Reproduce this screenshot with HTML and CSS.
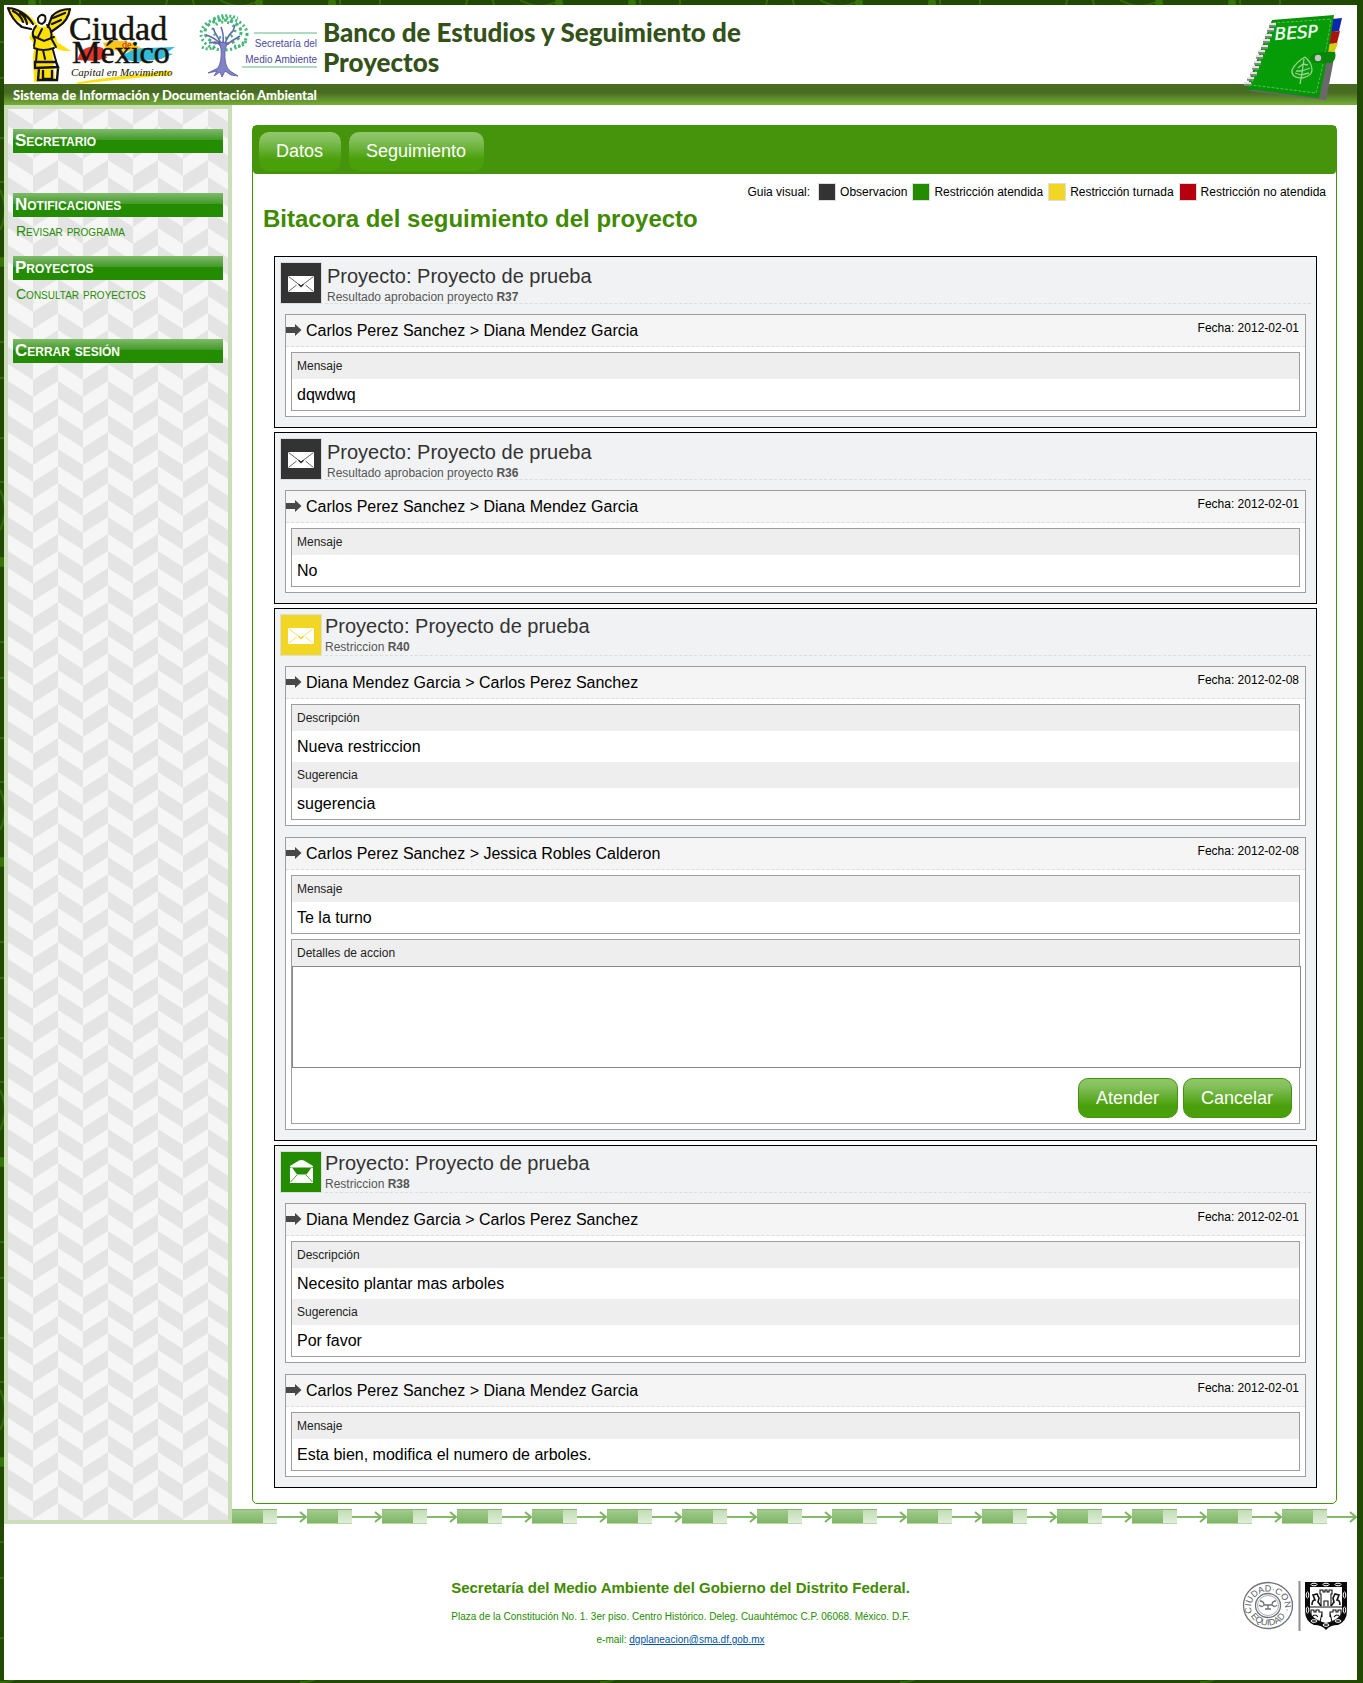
FILE: index.html
```html
<!DOCTYPE html>
<html lang="es">
<head>
<meta charset="utf-8">
<meta name="viewport" content="width=device-width, initial-scale=1">
<title>Banco de Estudios y Seguimiento de Proyectos</title>
<link rel="stylesheet" href="styles.css">
</head>
<body>
<svg class="sprite" aria-hidden="true">
  <symbol id="mail" viewBox="0 0 40 40">
    <path d="M7 13h26v16H7z" fill="#fff"/>
    <path d="M7.5 13.5l12.500 9.500l12.500-9.500M7.500 28.500l8-6.500M32.500 28.500l-8-6.500" fill="none" stroke="currentColor" stroke-width="1" opacity=".75"/>
    <path d="M17.500 21.200l2.500 2.300l2.500-2.300" fill="none" stroke="currentColor" stroke-width="1.500"/>
  </symbol>
  <symbol id="mail-open" viewBox="0 0 40 40">
    <path d="M9 14l9-5.500q2.500-1 5 0l9 5.500v17H9z" fill="#fff"/>
    <path d="M11 15.500h19.500l-5 7h-9.500zM9 15h2l-1.500 1zM32 15h-2l1.500 1z" fill="currentColor"/>
    <path d="M9.500 30l6.500-7M31.500 30l-6.500-7" stroke="currentColor" fill="none" opacity=".8"/>
  </symbol>
  <symbol id="arrow" viewBox="0 0 16 14">
    <path d="M0 4h9V1l6.500 6L9 13V10H0z" fill="#484848"/>
  </symbol>
</svg>

<div class="page">
  <header class="header">
    <div class="brand">
      <svg class="logo-city" viewBox="0 0 172 79" role="img" aria-label="Ciudad de México">
        <path d="M74 46q10-7 22-3l4 10-12 3-18-1z" fill="#e2362c"/>
        <path d="M96 38q14-5 30 0l9 6-18 3-18-3z" fill="#fbc51c"/>
        <path d="M112 53q14-11 27-10l29-1-9 6 7 1-12 5-25 3z" fill="#35b9d6"/>
        <path d="M68 78q30-6 96-12v4q-40 3-92 9z" fill="#ffe10a"/>
        <path d="M2 4q12-2 24 10l7 8 8-1 5-11q8-6 17-7-3 14-13 20l-6 4q6 4 6 10l14 9q-14 1-20-7l2 14 2 22-21 2-1-26 2-12-6-6 8-13-11-2Q6 17 2 4z" fill="#ffe10a"/>
        <path d="M1 3q6 0 13 4 8 5 12 12M1 3q4 12 14 19l9 2M6 6q8 4 10 11M13 8q6 4 7 11M63 4q-11 0-18 7l-4 11M63 4q-2 12-12 18l-7 5M58 8l-12 5M54 15l-9 4" fill="none" stroke="#14130c" stroke-width="2.200" stroke-linecap="round"/>
        <path d="M31 13q3-5 7-2 2 5-3 8-5-1-4-6zM29 21q-6 7-1 14l-1 6M40 20q6 6 4 13l5 9M26 31l11 5 10-4M27 43q9 4 20 0M30 45l-1 12M46 45l3 11M35 24l-4 8M36 45l2 9" fill="none" stroke="#14130c" stroke-width="2" stroke-linecap="round"/>
        <path d="M28 57h21l2 5-23 1zM32 63l-1 12h19l1-12M36 66v8h9v-8" fill="none" stroke="#14130c" stroke-width="2.400" stroke-linecap="round"/>
        <text x="62" y="35" class="city-name" font-size="34">Ciudad</text>
        <text x="65" y="58" class="city-name" font-size="32">México</text>
        <text x="115" y="43" class="city-name city-name--de" font-size="10">de</text>
        <text x="64" y="71" class="city-motto" font-size="11">Capital en Movimiento</text>
      </svg>
      <svg class="logo-sma" viewBox="0 0 122 66" role="img" aria-label="Secretaría del Medio Ambiente">
        <g fill="none" stroke="#45b678" stroke-width="3" stroke-dasharray="2 2.500">
          <ellipse cx="26" cy="21" rx="23" ry="16"/>
          <ellipse cx="25" cy="19" rx="18" ry="12" stroke-dasharray="3 3"/>
          <ellipse cx="26" cy="17" rx="11" ry="8" stroke-dasharray="2 4"/>
          <path d="M4 34q6 4 14-1M36 33q8 2 12-5M16 6q8-6 24-1" stroke-dasharray="2 2"/>
        </g>
        <path d="M22 31Q18 25 8 22M23 30Q17 20 15 15M25 30q1-9-2-16M27 30q4-9 8-12l2-6M28 32q7-5 14-9M11 30q8-2 12 3" fill="none" stroke="#6668b0" stroke-width="1.600"/>
        <path d="M21 29l2 7q1 12-3 19l-10 5 9-2-3 5 6-4 2 5 3-6 6 4 7 1-8-5q-6-5-5-20l2-8z" fill="#8183c4" stroke="#5557a4" stroke-width=".8"/>
        <path d="M56 20h63M44 54h75" stroke="#56bb83" stroke-width="1"/>
        <text x="119" y="34" class="sma-name" font-size="10" text-anchor="end">Secretaría del</text>
        <text x="119" y="50" class="sma-name" font-size="10" text-anchor="end">Medio Ambiente</text>
      </svg>
      <h1 class="brand__title">Banco de Estudios y Seguimiento de Proyectos</h1>
    </div>
    <p class="header__bar">Sistema de Información y Documentación Ambiental</p>
    <svg class="logo-besp" viewBox="0 0 100 90" role="img" aria-label="BESP">
      <path d="M5 77l78 9 7-36 3-42-3 1-76 66z" fill="#69696b"/>
      <path d="M89 5l10-1-3 13-9 1z" fill="#0b27ad"/><path d="M87 18l10-1-3 12-9 1z" fill="#a91509"/><path d="M85 30l10-1-4 10-9 1z" fill="#d4cb16"/>
      <path d="M29 6L91 1Q84 50 76 84L3 75z" fill="#079307"/>
      <path d="M30 9l58-4Q82 46 73 79L8 71z" fill="#059c08" stroke="#5ac054" stroke-dasharray="3 1.500"/>
      <path d="M26 11h7M24 16h7M22 22h7M20 27h7M18 33h7M15 38h7M13 43h7M11 49h7M9 54h7M7 60h7M4 65h7M1 70h7" stroke="#888" stroke-width="3.500"/>
      <path d="M26 10h7M24 15h7M22 21h7M20 26h7M18 32h7M15 37h7M13 42h7M11 48h7M9 53h7M7 59h7M4 64h7M1 69h7" stroke="#e3e3e3" stroke-width="2.200"/>
      <path d="M73 39q10-2 19-1 2 6-3 11H75q-7 0-8-5 1-4 6-5z" fill="#0a860b"/><circle cx="75" cy="44" r="3.200" fill="#c5c5c5"/>
      <path d="M57 70q2-10 4-25M62 43q-9 5-13 13-1 8 10 8 10-2 10-8 0-7-7-13M60 50l5 1M60 50l-5 4M59 57l8-3M59 57l-6 0M58 61l8-2M58 61l-6-2" fill="none" stroke="#9bd48f" stroke-width="1.300"/>
      <text x="32" y="26" class="besp-name" font-size="17" transform="rotate(-4 32 26)">BESP</text>
    </svg>
  </header>

  <div class="body">
    <nav class="sidebar" aria-label="Menú principal">
      <section class="menu menu--profile">
        <h2 class="menu__bar">Secretario</h2>
      </section>
      <section class="menu">
        <h2 class="menu__bar">Notificaciones</h2>
        <a class="menu__link" href="#revisar">Revisar programa</a>
      </section>
      <section class="menu menu--last">
        <h2 class="menu__bar">Proyectos</h2>
        <a class="menu__link" href="#consultar">Consultar proyectos</a>
      </section>
      <a class="menu__bar" href="#salir">Cerrar sesión</a>
    </nav>

    <main class="content">
      <div class="panel">
        <div class="tabs">
          <button class="btn" type="button">Datos</button>
          <button class="btn" type="button">Seguimiento</button>
        </div>
        <div class="legend">
          <span class="legend__title">Guia visual:</span>
          <span class="legend__item"><i class="swatch dark"></i>Observacion</span>
          <span class="legend__item"><i class="swatch green"></i>Restricción atendida</span>
          <span class="legend__item"><i class="swatch yellow"></i>Restricción turnada</span>
          <span class="legend__item"><i class="swatch red"></i>Restricción no atendida</span>
        </div>
        <h2 class="panel__title">Bitacora del seguimiento del proyecto</h2>

        <div class="cards">
          <article class="card">
            <header class="card__head">
              <svg class="card__icon dark"><use href="#mail"/></svg>
              <div class="card__text">
                <h3 class="card__title">Proyecto: Proyecto de prueba</h3>
                <p class="card__sub">Resultado aprobacion proyecto <b>R37</b></p>
              </div>
            </header>
            <section class="entry">
              <header class="entry__head"><svg class="entry__arrow"><use href="#arrow"/></svg><h4 class="entry__who">Carlos Perez Sanchez &gt; Diana Mendez Garcia</h4><span class="entry__date">Fecha: 2012-02-01</span></header>
              <dl class="box"><dt>Mensaje</dt><dd>dqwdwq</dd></dl>
            </section>
          </article>

          <article class="card">
            <header class="card__head">
              <svg class="card__icon dark"><use href="#mail"/></svg>
              <div class="card__text">
                <h3 class="card__title">Proyecto: Proyecto de prueba</h3>
                <p class="card__sub">Resultado aprobacion proyecto <b>R36</b></p>
              </div>
            </header>
            <section class="entry">
              <header class="entry__head"><svg class="entry__arrow"><use href="#arrow"/></svg><h4 class="entry__who">Carlos Perez Sanchez &gt; Diana Mendez Garcia</h4><span class="entry__date">Fecha: 2012-02-01</span></header>
              <dl class="box"><dt>Mensaje</dt><dd>No</dd></dl>
            </section>
          </article>

          <article class="card card--restriction">
            <header class="card__head">
              <svg class="card__icon yellow"><use href="#mail"/></svg>
              <div class="card__text">
                <h3 class="card__title">Proyecto: Proyecto de prueba</h3>
                <p class="card__sub">Restriccion <b>R40</b></p>
              </div>
            </header>
            <section class="entry">
              <header class="entry__head"><svg class="entry__arrow"><use href="#arrow"/></svg><h4 class="entry__who">Diana Mendez Garcia &gt; Carlos Perez Sanchez</h4><span class="entry__date">Fecha: 2012-02-08</span></header>
              <dl class="box"><dt>Descripción</dt><dd>Nueva restriccion</dd><dt>Sugerencia</dt><dd>sugerencia</dd></dl>
            </section>
            <section class="entry">
              <header class="entry__head"><svg class="entry__arrow"><use href="#arrow"/></svg><h4 class="entry__who">Carlos Perez Sanchez &gt; Jessica Robles Calderon</h4><span class="entry__date">Fecha: 2012-02-08</span></header>
              <dl class="box"><dt>Mensaje</dt><dd>Te la turno</dd></dl>
              <form class="box">
                <label class="box__label" for="detalles">Detalles de accion</label>
                <textarea class="box__input" id="detalles"></textarea>
                <div class="box__actions">
                  <button class="btn btn--outlined" type="button">Atender</button>
                  <button class="btn btn--outlined" type="button">Cancelar</button>
                </div>
              </form>
            </section>
          </article>

          <article class="card card--restriction">
            <header class="card__head">
              <svg class="card__icon green"><use href="#mail-open"/></svg>
              <div class="card__text">
                <h3 class="card__title">Proyecto: Proyecto de prueba</h3>
                <p class="card__sub">Restriccion <b>R38</b></p>
              </div>
            </header>
            <section class="entry">
              <header class="entry__head"><svg class="entry__arrow"><use href="#arrow"/></svg><h4 class="entry__who">Diana Mendez Garcia &gt; Carlos Perez Sanchez</h4><span class="entry__date">Fecha: 2012-02-01</span></header>
              <dl class="box"><dt>Descripción</dt><dd>Necesito plantar mas arboles</dd><dt>Sugerencia</dt><dd>Por favor</dd></dl>
            </section>
            <section class="entry">
              <header class="entry__head"><svg class="entry__arrow"><use href="#arrow"/></svg><h4 class="entry__who">Carlos Perez Sanchez &gt; Diana Mendez Garcia</h4><span class="entry__date">Fecha: 2012-02-01</span></header>
              <dl class="box"><dt>Mensaje</dt><dd>Esta bien, modifica el numero de arboles.</dd></dl>
            </section>
          </article>
        </div>
      </div>
      <div class="strip"></div>
    </main>
  </div>

  <footer class="footer">
    <div class="footer__text">
      <p class="footer__title">Secretaría del Medio Ambiente del Gobierno del Distrito Federal.</p>
      <p class="footer__address">Plaza de la Constitución No. 1. 3er piso. Centro Histórico. Deleg. Cuauhtémoc C.P. 06068. México. D.F.</p>
      <p class="footer__mail">e-mail: <a href="mailto:dgplaneacion@sma.df.gob.mx">dgplaneacion@sma.df.gob.mx</a></p>
    </div>
    <svg class="footer__logos" viewBox="0 0 108 50" role="img" aria-label="Ciudad con equidad">
      <defs>
        <path id="ring-top" d="M11 32A17 16 0 1 1 43 32"/>
        <path id="ring-bottom" d="M8 32A20.500 20 0 0 0 46 32"/>
      </defs>
      <g fill="none" stroke="#6f7377">
        <ellipse cx="27" cy="24.500" rx="24.500" ry="23" stroke-width="1.300"/>
        <ellipse cx="27" cy="24.500" rx="12.500" ry="12" stroke-width="1.300"/>
        <ellipse cx="27" cy="24.500" rx="10.500" ry="10" stroke-width=".6"/>
        <path d="M18 24q3 3 5 0h8q3 3 5 0M19 20q4 0 4 4M35 20q-4 0-4 4M24 28h6M27 24v4" stroke-width="1.300"/>
      </g>
      <text class="seal" font-size="9"><textPath href="#ring-top" startOffset="0">CIUDAD·CON·</textPath></text>
      <text class="seal" font-size="9"><textPath href="#ring-bottom" startOffset="50%" text-anchor="middle">EQUIDAD</textPath></text>
      <path d="M58.500 0v50" stroke="#8f8f8f" stroke-width="2"/>
      <path d="M64 1h42v29q0 10-9 14-8 0-12 5-4-5-12-5-9-4-9-14z" fill="#0b0b0b"/>
      <path d="M69 6h32v24q-1 8-16 12-15-4-16-12z" fill="#fff"/>
      <g fill="none" stroke="#111" stroke-width="1.100">
        <path d="M80 25V13h-1V9h3v2h2V9h2v2h2V9h3v4h-1v12M83 25v-5h4v5M70 34v-5h3v2h2v-2h3v2h3v5M100 34v-5h-3v2h-2v-2h-3v2h-3v5M71 36q3-4 6 0M93 36q3-4 6 0M81 32l-2 9M89 32l2 9M69 26h32"/>
        <path d="M71 24q0-5 3-5l-2-5 4-1 2 4-1 4 3 4M99 24q0-5-3-5l2-5-4-1-2 4 1 4-3 4" stroke-width="1.600"/>
      </g>
      <g fill="none" stroke="#fff" stroke-width="1"><ellipse cx="73" cy="3.500" rx="3" ry="1.300"/><ellipse cx="85" cy="3.500" rx="3" ry="1.300"/><ellipse cx="97" cy="3.500" rx="3" ry="1.300"/><ellipse cx="66.500" cy="14" rx="1.300" ry="3"/><ellipse cx="103.500" cy="14" rx="1.300" ry="3"/><ellipse cx="66.500" cy="29" rx="1.300" ry="3"/><ellipse cx="103.500" cy="29" rx="1.300" ry="3"/><ellipse cx="73" cy="40" rx="3" ry="1.300"/><ellipse cx="97" cy="40" rx="3" ry="1.300"/><ellipse cx="85" cy="44" rx="3" ry="1.300"/></g>
    </svg>
  </footer>
</div>
</body>
</html>
```
FILE: styles.css
```css
* { box-sizing: border-box; }

html {
  background: #214902 url("data:image/svg+xml,%3Csvg xmlns='http://www.w3.org/2000/svg' width='300' height='300'%3E%3Cg fill='none' stroke='%23306b06' stroke-width='2'%3E%3Ccircle cx='2' cy='60' r='18'/%3E%3Ccircle cx='4' cy='160' r='22'/%3E%3Ccircle cx='298' cy='230' r='16'/%3E%3Ccircle cx='60' cy='2' r='20'/%3E%3Ccircle cx='130' cy='298' r='24'/%3E%3Ccircle cx='180' cy='6' r='14'/%3E%3Cpath d='M220 0q20 12 40 0M292 90q12 20 2 40M0 190q10 20 0 40'/%3E%3C/g%3E%3Cg fill='%23347506'%3E%3Ccircle cx='32' cy='3' r='4'/%3E%3Ccircle cx='259' cy='3' r='4'/%3E%3Ccircle cx='297' cy='96' r='6'/%3E%3Ccircle cx='297' cy='190' r='6'/%3E%3Ccircle cx='2' cy='262' r='5'/%3E%3C/g%3E%3C/svg%3E");
}

body {
  margin: 0;
  padding: 5px 6px 3px 4px;
  font-family: "Liberation Sans", Arial, sans-serif;
  font-size: 16px;
  color: #000;
}

h1, h2, h3, h4, p, dl, dd { margin: 0; font-weight: normal; }

.sprite { display: none; }
.page { background: #fff; }

.dark { background: #333; color: #333; }
.green { background: #248c00; color: #248c00; }
.yellow { background: #f1d624; color: #f1d624; }
.red { background: #b6000f; color: #b6000f; }

/* Header */
.header { position: relative; }
.brand { display: flex; height: 79px; padding-left: 3px; }
.logo-city { width: 172px; height: 79px; flex: none; }
.logo-sma { width: 122px; height: 66px; flex: none; margin: 8px 3px 0 19px; }
.city-name { font-family: "Liberation Serif", serif; fill: #14130c; stroke: #14130c; stroke-width: 0.5px; }
.city-name--de { fill: #b32020; stroke: none; }
.city-motto { font-family: "Liberation Serif", serif; font-style: italic; fill: #14130c; }
.sma-name { font-family: "Liberation Sans", sans-serif; fill: #4b4a9d; }
.brand__title {
  max-width: 450px;
  padding-top: 12px;
  font: 900 26px/30px Lato, sans-serif;
  color: #335118;
}
.header__bar {
  height: 21px;
  padding: 1px 0 0 9px;
  background: linear-gradient(#486b22 0, #486b22 40%, #76ae37 100%);
  font: 900 13px/20px Lato, sans-serif;
  color: #fff;
}
.logo-besp { position: absolute; right: 14px; top: 9px; width: 100px; height: 90px; }
.besp-name { font-family: "DejaVu Sans", sans-serif; font-style: italic; fill: #fff; stroke: #fff; stroke-width: 0.3px; }

/* Columns */
.body { display: grid; grid-template-columns: 228px minmax(0, 1fr); }

.sidebar {
  padding: 20px 5px;
  border: 4px solid #cbddb9;
  background: url("data:image/svg+xml,%3Csvg xmlns='http://www.w3.org/2000/svg' width='50' height='34'%3E%3Cpath fill='%23f6f6f6' d='M0 0h50v34H0z'/%3E%3Cpath fill='%23e4e4e4' d='M0 0L25 16V33L0 17zM25 -1L50 -17V0L25 16zM25 33L50 17V34L25 50zM0 34L25 50V67L0 51zM0 -34L25 -18V-1L0 -17z'/%3E%3C/svg%3E");
}
.menu { margin-bottom: 11px; }
.menu--profile { margin-bottom: 40px; }
.menu--last { margin-bottom: 31px; }
.menu__bar {
  display: block;
  padding-left: 2px;
  background: linear-gradient(#7fbb6a 0, #43992a 46%, #248c00 47%);
  font-size: 17px;
  line-height: 24px;
  font-weight: bold;
  font-variant: small-caps;
  color: #fff;
  text-decoration: none;
}
.menu__link {
  display: block;
  padding-left: 3px;
  font-size: 14px;
  line-height: 28px;
  font-variant: small-caps;
  color: #248c00;
  text-decoration: none;
}

.content { display: flex; flex-direction: column; min-width: 0; }
.panel {
  margin: 20px 20px 5px;
  padding-bottom: 15px;
  border: 1px solid #45940c;
  border-radius: 5px;
}
.tabs {
  display: flex;
  gap: 8px;
  padding: 6px 6px 3px;
  background: #45940c;
  border-radius: 0 0 4px 4px;
}
.btn {
  height: 39px;
  padding: 0 18px 2px 17px;
  border: 0;
  border-radius: 10px;
  background: linear-gradient(#8fc76a 0, #84bf5c 20%, #4aa00b 70%);
  font: 18px/20px "Liberation Sans", Arial, sans-serif;
  color: #fff;
}
.btn--outlined { height: 40px; padding-bottom: 0; border: 1px solid #45940c; }

.legend {
  display: flex;
  flex-wrap: wrap;
  justify-content: flex-end;
  gap: 5px;
  padding: 9px 10px 4px;
  font-size: 12px;
  line-height: 18px;
}
.legend__title { margin-right: 3px; }
.legend__item { display: flex; gap: 4px; }
.swatch { width: 18px; height: 18px; border: 1px solid #ddd; }

.panel__title {
  padding: 0 10px;
  font-size: 24px;
  line-height: 28px;
  font-weight: bold;
  color: #3f8a00;
}

/* Log cards */
.cards { display: flex; flex-direction: column; gap: 4px; padding: 23px 19px 0 21px; }
.card { padding-bottom: 10px; border: 1px solid #000; background: #f1f2f4; }
.card__head { display: flex; gap: 3px; padding: 5px 5px 0; }
.card__icon { flex: none; width: 42px; height: 42px; border: 1px solid #ddd; }
.card__text { flex: 1; padding: 2px 0 0 2px; height: 42px; border-bottom: 1px dashed #ddd; }
.card--restriction .card__text { padding: 0; }
.card__title { font-size: 20px; line-height: 24px; color: #333; }
.card__sub { margin-top: 2px; font-size: 12px; line-height: 14px; color: #555; }

.entry { margin: 10px 10px 0; padding-bottom: 5px; border: 1px solid #9e9e9e; background: #fff; }
.entry + .entry { margin-top: 11px; }
.entry__head {
  display: flex;
  height: 32px;
  background: #f5f5f5;
  border-bottom: 1px dashed #ddd;
}
.entry__arrow { width: 16px; height: 14px; margin: 8px 4px 0 0; }
.entry__who { flex: 1; line-height: 31px; font-size: 16px; }
.entry__date { padding-right: 6px; font-size: 12px; line-height: 26px; }

.box { margin: 5px 5px 0; border: 1px solid #9e9e9e; background: #fff; }
.box dt, .box__label {
  display: block;
  padding-left: 5px;
  background: #eee;
  font-size: 12px;
  line-height: 26px;
  color: #222;
}
.box dd { padding-left: 5px; line-height: 31px; }
.box__input {
  display: block;
  width: calc(100% + 2px);
  height: 102px;
  border: 1px solid #888;
  background: #fff;
  resize: none;
}
.box__actions { display: flex; justify-content: flex-end; gap: 5px; padding: 10px 7px 5px; }

.strip {
  height: 15px;
  margin-top: auto;
  background: url("data:image/svg+xml,%3Csvg xmlns='http://www.w3.org/2000/svg' width='75' height='15'%3E%3Cdefs%3E%3ClinearGradient id='a' x2='0' y2='1'%3E%3Cstop stop-color='%23a3cc90'/%3E%3Cstop offset='1' stop-color='%237db462'/%3E%3C/linearGradient%3E%3ClinearGradient id='b' x2='0' y2='1'%3E%3Cstop stop-color='%23c0dbb2'/%3E%3Cstop offset='1' stop-color='%23e2efdb'/%3E%3C/linearGradient%3E%3C/defs%3E%3Cpath fill='url(%23a)' d='M0 0h31v15H0z'/%3E%3Cpath fill='url(%23b)' d='M31 0h14v15H31z'/%3E%3Cpath fill='%2385ba6d' d='M0 0h45v1H0zM45 7h28v2H45z'/%3E%3Cpath fill='%23b5d5a5' d='M0 14h45v1H0z'/%3E%3Cpath fill='none' stroke='%237db462' stroke-width='2' d='M68 3l6 5-6 5'/%3E%3C/svg%3E") repeat-x;
}

/* Footer */
.footer {
  display: grid;
  grid-template-columns: 1fr auto 1fr;
  padding: 54px 8px 32px;
  color: #248c00;
}
.footer__text { grid-column: 2; text-align: center; }
.footer__title { font-size: 15px; line-height: 20px; font-weight: bold; color: #3f8a00; }
.footer__address { margin-top: 11px; font-size: 10px; line-height: 16px; }
.footer__mail { margin-top: 7px; font-size: 10px; line-height: 16px; }
.footer__mail a { color: #0054a6; }
.footer__logos { justify-self: end; width: 108px; height: 50px; margin-top: 3px; }
.seal { font-family: "Liberation Sans", sans-serif; fill: #5c6064; }
```
